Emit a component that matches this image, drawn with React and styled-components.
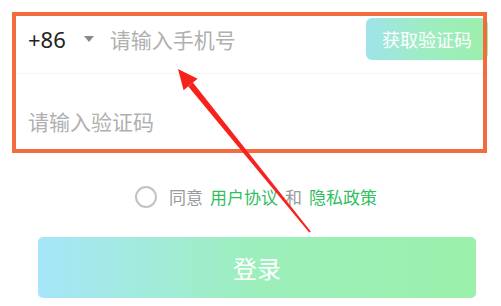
import React from "react";
import styled, { createGlobalStyle } from "styled-components";

const GlobalStyle = createGlobalStyle`
  body {
    margin: 0;
    background: #fff;
    font-family: "Noto Sans CJK SC", "Noto Sans", sans-serif;
  }
`;

const Page = styled.div`
  position: relative;
  width: 501px;
  height: 306px;
  overflow: hidden;
  padding-top: 12px;
  box-sizing: border-box;
`;

const FormBox = styled.div`
  position: relative;
  margin-left: 12px;
  width: 475px;
  height: 141px;
`;

// annotation frame drawn over the form
const Frame = styled.div`
  position: absolute;
  inset: 0;
  border: 4px solid #f36c3e;
  pointer-events: none;
  z-index: 2;
`;

const PhoneRow = styled.div`
  display: flex;
  align-items: center;
  height: 42px;
  padding: 6px 0 13px 16px;
  margin-right: -1px;
  border-bottom: 1px solid #f6f6f6;
`;

const Code = styled.span`
  font-family: "Noto Sans", sans-serif;
  font-size: 22px;
  color: #222;
`;

const Caret = styled.span`
  width: 0;
  height: 0;
  margin: 0 16px 0 18px;
  border-left: 5px solid transparent;
  border-right: 5px solid transparent;
  border-top: 6px solid #8a8a8a;
`;

const Placeholder = styled.span`
  flex: ${(p) => (p.$grow ? 1 : "none")};
  font-size: 21px;
  line-height: 30px;
  color: #b0b0b0;
`;

const CodeButton = styled.button`
  width: 122px;
  height: 42px;
  border: none;
  border-radius: 6px;
  background: linear-gradient(90deg, #9fe3ea 0%, #9eecc4 45%, #9cefaa 100%);
  color: #fff;
  font-family: inherit;
  font-size: 18px;
  padding: 0;
`;

const CodeRow = styled.div`
  display: flex;
  padding: 32px 0 0 16px;
`;

const Agree = styled.div`
  display: flex;
  align-items: center;
  gap: 7px;
  margin: 32px 0 0 135px;
  font-size: 17px;
  line-height: 24px;
`;

const Radio = styled.span`
  width: 18px;
  height: 18px;
  border: 2.5px solid #c2c2c2;
  border-radius: 50%;
  margin-right: 5px;
`;

const Word = styled.span`
  color: ${(p) => (p.$link ? "#2fbf5f" : "#9a9a9a")};
`;

const LoginButton = styled.button`
  display: block;
  margin: 28px 0 0 38px;
  width: 438px;
  height: 61px;
  border: none;
  border-radius: 5px;
  background: linear-gradient(90deg, #a6e6f8 0%, #a2eadc 25%, #9cefbb 50%, #9bf0ab 100%);
  color: #fff;
  font-family: inherit;
  font-size: 24px;
  padding: 0;
`;

const Arrow = styled.svg`
  position: absolute;
  left: 0;
  top: 0;
  pointer-events: none;
  z-index: 3;
`;

export default function App() {
  return (
    <Page>
      <GlobalStyle />
      <FormBox>
        <PhoneRow>
          <Code>+86</Code>
          <Caret />
          <Placeholder $grow>请输入手机号</Placeholder>
          <CodeButton>获取验证码</CodeButton>
        </PhoneRow>
        <CodeRow>
          <Placeholder>请输入验证码</Placeholder>
        </CodeRow>
        <Frame />
      </FormBox>
      <Agree>
        <Radio />
        <Word>同意</Word>
        <Word $link>用户协议</Word>
        <Word>和</Word>
        <Word $link>隐私政策</Word>
      </Agree>
      <LoginButton>登录</LoginButton>
      <Arrow width="501" height="306" viewBox="0 0 501 306">
        <polygon points="178,69 197.6,78.8 183.6,90.2" fill="#f5231c" />
        <polygon
          points="188.3,86.4 192.9,82.6 310.8,231.4 309.2,232.6"
          fill="#f5231c"
        />
      </Arrow>
    </Page>
  );
}
